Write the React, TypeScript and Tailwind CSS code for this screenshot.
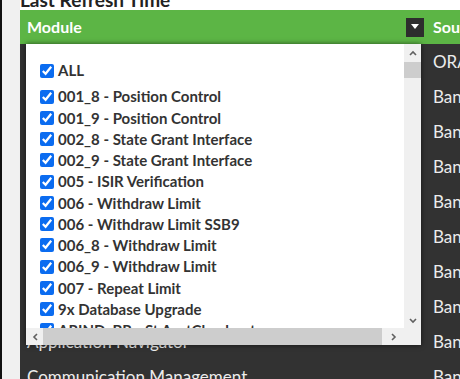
import React from "react";

const modules = [
  "001_8 - Position Control",
  "001_9 - Position Control",
  "002_8 - State Grant Interface",
  "002_9 - State Grant Interface",
  "005 - ISIR Verification",
  "006 - Withdraw Limit",
  "006 - Withdraw Limit SSB9",
  "006_8 - Withdraw Limit",
  "006_9 - Withdraw Limit",
  "007 - Repeat Limit",
  "9x Database Upgrade",
  "ARIND_BR - St AcctCheckout",
];

const rows = [
  ["Account Maintenance", "ORACLE"],
  ["Admissions Review", "Banner"],
  ["Advancement Gifts", "Banner"],
  ["Aid Year Rollover", "Banner"],
  ["Alumni Records", "Banner"],
  ["Applicant Status", "Banner"],
  ["Application Forms", "Banner"],
  ["Application Review", "Banner"],
  ["Application Navigator", "Banner"],
  ["Communication Management", "Banner"],
];

const Chevron = ({ dir }: { dir: "up" | "down" | "left" | "right" }) => {
  const pts = {
    up: "2,7 5,4 8,7",
    down: "2,4 5,7 8,4",
    left: "7,2 4,5 7,8",
    right: "4,2 7,5 4,8",
  }[dir];
  return (
    <svg width="10" height="10" viewBox="0 0 10 10">
      <polyline points={pts} fill="none" stroke="#606060" strokeWidth="1.6" />
    </svg>
  );
};

export default function App() {
  return (
    <div className="flex w-[460px] h-[379px] overflow-hidden bg-white font-['Lato',sans-serif]">
      <div className="w-[20px] shrink-0 bg-[#f0f0f0] border-l-2 border-[#111]" />
      <div className="flex-1 flex flex-col relative">
        <div className="h-[10px] shrink-0 overflow-hidden">
          <div className="-mt-[10px] text-[19px] leading-[20px] font-bold text-[#222] whitespace-nowrap">
            Last Refresh Time
          </div>
        </div>
        <div className="h-[34px] shrink-0 bg-[#5cb545] grid grid-cols-[406px_1fr] text-white font-bold text-[16px]">
          <div className="flex items-center justify-between pl-[7px] pr-[2px]">
            <span>Module</span>
            <span className="w-[18px] h-[19px] bg-[#2d2d2d] flex items-center justify-center">
              <svg width="8" height="6" viewBox="0 0 8 6">
                <polygon points="0,0 8,0 4,5" fill="#fff" />
              </svg>
            </span>
          </div>
          <div className="flex items-center pl-[7px] whitespace-nowrap">Source</div>
        </div>
        <div className="flex-1 shrink-0 bg-[#323232] text-[#ececec] text-[17px]">
          {rows.map(([name, src]) => (
            <div key={name} className="h-[35px] shrink-0 grid grid-cols-[406px_1fr] items-center whitespace-nowrap">
              <div className="pl-[7px]">{name}</div>
              <div className="pl-[7px]">{src}</div>
            </div>
          ))}
        </div>

        <div className="absolute left-[6px] top-[44px] w-[395px] h-[301px] bg-white shadow-[0_0_5px_rgba(0,0,0,0.6)] flex flex-col">
          <div className="flex flex-1 min-h-0">
            <div className="flex-1 overflow-hidden pl-[14px] pt-[16px] text-[15px] font-bold text-[#333] whitespace-nowrap">
              <label className="flex items-center gap-[4px] h-[21px] mb-[5px]">
                <input type="checkbox" defaultChecked className="w-[14px] h-[14px] m-0 accent-[#0b6cf0]" />
                <span>ALL</span>
              </label>
              {modules.map((m) => (
                <label key={m} className="flex items-center gap-[4px] h-[21.25px]">
                  <input type="checkbox" defaultChecked className="w-[14px] h-[14px] m-0 accent-[#0b6cf0]" />
                  <span>{m}</span>
                </label>
              ))}
            </div>
            <div className="w-[17px] bg-[#f0f0f0] flex flex-col items-center">
              <div className="h-[17px] flex items-center justify-center">
                <Chevron dir="up" />
              </div>
              <div className="w-[17px] h-[16px] bg-[#cdcdcd] mt-[1px]" />
              <div className="flex-1" />
              <div className="h-[17px] flex items-center justify-center">
                <Chevron dir="down" />
              </div>
            </div>
          </div>
          <div className="h-[17px] shrink-0 bg-[#f0f0f0] flex items-center">
            <div className="w-[17px] flex justify-center">
              <Chevron dir="left" />
            </div>
            <div className="w-[339px] h-[17px] bg-[#cdcdcd]" />
            <div className="w-[22px] flex justify-center">
              <Chevron dir="right" />
            </div>
            <div className="flex-1" />
          </div>
        </div>
      </div>
    </div>
  );
}
